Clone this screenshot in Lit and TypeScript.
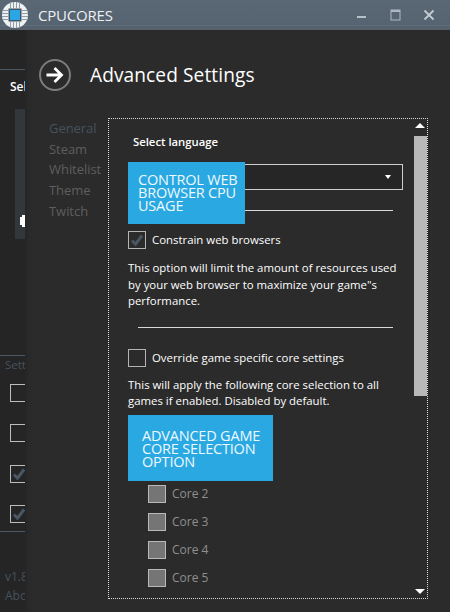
import { LitElement, html, css, svg } from "lit";
import { customElement } from "lit/decorators.js";

const logo = svg`<svg class="logo" viewBox="0 0 30 30" width="30" height="30">
  <circle cx="15" cy="15" r="13" fill="#eef1f3"/>
  <g stroke="#8f9ba5" stroke-width="1" fill="none">
    <path d="M2 10.5h6M2 13.5h6M2 16.5h6M2 19.5h6M22 10.5h6M22 13.5h6M22 16.5h6M22 19.5h6"/>
    <path d="M10.5 2v6M13.5 2v6M16.5 2v6M19.5 2v6M10.5 22v6M13.5 22v6M16.5 22v6M19.5 22v6"/>
  </g>
  <rect x="8.5" y="8.5" width="13" height="13" fill="#3f5566"/>
  <rect x="10" y="10" width="10" height="10" fill="#2aa5e6"/>
</svg>`;

const check = svg`<svg class="tick" viewBox="0 0 18 18" width="18" height="18"><path d="M4 9.5l3.5 3.7L14 4.5" fill="none" stroke="#4a5663" stroke-width="3"/></svg>`;

@customElement("app-root")
export class AppRoot extends LitElement {
  static styles = css`
    :host {
      display: flex;
      flex-direction: column;
      width: 450px;
      height: 612px;
      overflow: hidden;
      background: #2b2b2b;
      font-family: "Open Sans", "Noto Sans", sans-serif;
      color: #fff;
    }
    .titlebar {
      flex: none;
      height: 30px;
      box-sizing: border-box;
      display: flex;
      align-items: center;
      background: linear-gradient(#5a6774, #566370);
      border-bottom: 4px solid #55626e;
      box-shadow: inset 0 -1px 0 #5f6d7a;
      position: relative;
    }
    .logo { flex: none; margin-top: 4px; }
    .appname {
      margin: 4px 0 0 8px;
      font-size: 15px;
      color: #eef1f3;
      letter-spacing: -0.2px;
      flex: 1;
    }
    .winbtn { width: 34px; display: flex; justify-content: center; align-items: center; margin-top: 4px; }
    .winbtns { display: flex; margin-right: 0; padding-right: 4px; }
    .body { flex: 1; display: flex; position: relative; min-height: 0; }

    .page {
      flex: none;
      width: 25px;
      overflow: hidden;
      background: #252525;
      display: flex;
      flex-direction: column;
      padding-top: 39px;
      box-sizing: border-box;
      font-size: 12px;
    }
    .page-inner { width: 120px; display: flex; flex-direction: column; }
    .rule { height: 1px; background: #4b5964; }
    .sel { margin: 8px 0 0 10px; font-size: 12px; font-weight: 600; height: 17px; line-height: 17px; }
    .sb {
      margin: 14px 0 0 15px;
      height: 130px;
      width: 30px;
      background: #32373b;
      position: relative;
    }
    .gear { position: absolute; left: 5px; top: 105px; width: 8px; height: 14px; }
    .sett { margin: 109px 0 0; padding-top: 7px; }
    .sett .rule { margin-bottom: 1px; }
    .sett-label { padding-left: 5px; color: #46525d; font-size: 11.5px; line-height: 16px; }
    .pchecks { display: flex; flex-direction: column; gap: 22.3px; margin: 11px 0 0 10px; }
    .pcheck { width: 18px; height: 18px; border: 1px solid #bdbdbd; box-sizing: border-box; }
    .tick { display: block; margin: -1px; }
    .bottom-rule { margin-top: 8px; }
    .ver { margin: 36px 0 0 5px; color: #46525d; font-size: 12px; line-height: 17px; }
    .abo { margin: 2px 0 0 5px; color: #46525d; font-size: 12px; line-height: 17px; }

    .fly {
      flex: 1;
      min-width: 0;
      background: #2b2b2b;
      box-shadow: inset 6px 0 6px -6px rgba(0, 0, 0, 0.22);
      display: flex;
      flex-direction: column;
      position: relative;
    }
    .head { display: flex; align-items: center; margin: 29px 0 0 14px; height: 32px; }
    .back { display: block; }
    .head h1 { margin: 0 0 0 19px; font-size: 19.1px; font-weight: 400; color: #fff; line-height: 32px; letter-spacing: 0.1px; }
    .main { display: flex; margin-top: 27px; }
    nav { width: 59px; margin-left: 24px; display: flex; flex-direction: column; font-size: 13px; line-height: 20.7px; color: #5e5e5e; letter-spacing: -0.05px; }
    nav .on { color: #46525d; }
    .box {
      width: 320px;
      height: 481px;
      box-sizing: border-box;
      border: 1px dotted #d8d8d8;
      display: flex;
      position: relative;
    }
    .content { flex: 1; min-width: 0; padding: 0 0 0 19px; font-size: 11.4px; }
    .lang { margin: 14px 0 0 5px; font-weight: 600; font-size: 11.3px; line-height: 18px; }
    .banner {
      position: absolute;
      background: #29a8e2;
      color: #eef9ff;
      text-transform: uppercase;
      font-size: 14.5px;
      line-height: 13px;
      box-sizing: border-box;
      letter-spacing: -0.2px;
    }
    .b1 { left: 19px; top: 43px; width: 117px; height: 62px; padding: 11px 0 0 10px; }
    .b2 { left: 19px; top: 296px; width: 145px; height: 66px; padding: 14px 0 0 14px; }
    .select {
      margin-top: 13px;
      width: 275px;
      height: 26px;
      box-sizing: border-box;
      border: 1px solid #cfcfcf;
      display: flex;
      justify-content: flex-end;
      align-items: center;
      padding-right: 11px;
      background: #262626;
    }
    .caret { width: 0; height: 0; border: 3.5px solid transparent; border-top: 4px solid #fff; border-bottom: 0; }
    hr { border: 0; height: 1px; background: #d8d8d8; margin: 0; }
    .hr1 { margin: 20px 0 0 10px; width: 255px; }
    .hr2 { margin: 0 0 0 10px; width: 255px; }
    .chk { display: flex; align-items: center; height: 18px; }
    .cb { width: 18px; height: 18px; box-sizing: border-box; border: 1px solid #b4b4b4; flex: none; }
    .chk span { margin-left: 6px; font-size: 11.4px; line-height: 18px; }
    .c1 { margin-top: 20px; }
    .c2 { margin-top: 21px; }
    p { margin: 0; font-size: 11.4px; line-height: 16.5px; width: 280px; }
    .p1 { margin-top: 11px; margin-bottom: 17px; }
    .p2 { margin-top: 10px; }
    .core-list { margin: 75px 0 0 20px; display: flex; flex-direction: column; gap: 10px; }
    .core .cb { background: #757575; border-color: #b9b9b9; }
    .core span { color: #8f8f8f; font-size: 12px; }
    .track { flex: none; width: 13px; position: relative; }
    .up, .down { width: 0; height: 0; border-left: 5px solid transparent; border-right: 5px solid transparent; position: absolute; left: 1px; }
    .up { top: 4px; border-bottom: 5px solid #fff; }
    .down { bottom: 4px; border-top: 5px solid #fff; }
    .thumb { position: absolute; top: 17px; left: 0; width: 13px; height: 260px; background: #b8b8b8; }
  `;

  render() {
    return html`
      <div class="titlebar">
        ${logo}
        <div class="appname">CPUCORES</div>
        <div class="winbtns">
          <div class="winbtn"><svg width="11" height="11" viewBox="0 0 11 11"><rect x="1" y="6" width="9" height="2" fill="#b7c1ca"/></svg></div>
          <div class="winbtn"><svg width="11" height="12" viewBox="0 0 11 12"><rect x="1" y="1" width="9" height="10" fill="none" stroke="#aeb8c1"/><rect x="1" y="1" width="9" height="2" fill="#aeb8c1"/></svg></div>
          <div class="winbtn"><svg width="12" height="12" viewBox="0 0 12 12"><path d="M1.5 1.5l9 9M10.5 1.5l-9 9" stroke="#c3ccd3" stroke-width="1.8"/></svg></div>
        </div>
      </div>
      <div class="body">
        <div class="page">
          <div class="page-inner">
            <div class="rule"></div>
            <div class="sel">Select</div>
            <div class="sb">
              <svg class="gear" viewBox="0 0 8 14"><path d="M0 3h2V1h3v2h3v8H5v2H2v-2H0z" fill="#fff"/></svg>
            </div>
            <div class="sett">
              <div class="rule"></div>
              <div class="sett-label">Settings</div>
              <div class="pchecks">
                <div class="pcheck"></div>
                <div class="pcheck"></div>
                <div class="pcheck">${check}</div>
                <div class="pcheck">${check}</div>
              </div>
              <div class="rule bottom-rule"></div>
              <div class="ver">v1.8</div>
              <div class="abo">About</div>
            </div>
          </div>
        </div>
        <div class="fly">
          <div class="head">
            <svg class="back" width="32" height="32" viewBox="0 0 32 32">
              <circle cx="16" cy="16" r="15" fill="none" stroke="#7d7d7d" stroke-width="2"/>
              <path d="M7.5 16h15M15.5 9l7 7-7 7" fill="none" stroke="#fff" stroke-width="2.8"/>
            </svg>
            <h1>Advanced Settings</h1>
          </div>
          <div class="main">
            <nav>
              <div class="on">General</div>
              <div>Steam</div>
              <div>Whitelist</div>
              <div>Theme</div>
              <div>Twitch</div>
            </nav>
            <div class="box">
              <div class="content">
                <div class="lang">Select language</div>
                <div class="select"><div class="caret"></div></div>
                <hr class="hr1" />
                <div class="banner b1">Control web browser CPU usage</div>
                <div class="chk c1"><div class="cb">${check}</div><span>Constrain web browsers</span></div>
                <p class="p1">This option will limit the amount of resources used by your web browser to maximize your game"s performance.</p>
                <hr class="hr2" />
                <div class="chk c2"><div class="cb"></div><span>Override game specific core settings</span></div>
                <p class="p2">This will apply the following core selection to all games if enabled. Disabled by default.</p>
                <div class="banner b2">Advanced game core selection option</div>
                <div class="core-list">
                  ${["Core 2", "Core 3", "Core 4", "Core 5"].map(
                    (c) => html`<div class="chk core"><div class="cb"></div><span>${c}</span></div>`
                  )}
                </div>
              </div>
              <div class="track">
                <div class="up"></div>
                <div class="thumb"></div>
                <div class="down"></div>
              </div>
            </div>
          </div>
        </div>
      </div>
    `;
  }
}
